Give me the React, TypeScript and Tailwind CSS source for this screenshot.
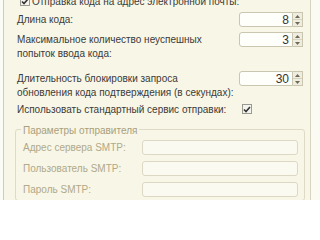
import React from "react"

const font = { fontFamily: '"Liberation Sans", Arial, sans-serif' }

function Check({ checked }: { checked?: boolean }) {
  return (
    <span className="flex h-[10px] w-[10px] shrink-0 items-center justify-center border border-[#9a9a90] bg-[#f4f3ee]">
      {checked && (
        <svg width="8" height="7" viewBox="0 0 8 7">
          <path d="M1 3.5 L3 5.5 L7 1" fill="none" stroke="#333" strokeWidth="1.6" />
        </svg>
      )}
    </span>
  )
}

function Spin({ value }: { value: string }) {
  return (
    <div className="flex h-[15px] shrink-0 items-stretch">
      <div className="flex w-[54px] items-center justify-end rounded-l-[3px] border border-[#c9c5ae] bg-[#fefefb] pr-[3px] text-[12px] text-[#333]">
        {value}
      </div>
      <div className="flex w-[10px] flex-col border-y border-r border-[#c9c5ae] bg-[#efece0]">
        <div className="flex flex-1 items-center justify-center border-b border-[#d6d2c0]">
          <svg width="5" height="3" viewBox="0 0 5 3"><path d="M0 3 L2.5 0 L5 3Z" fill="#6f6a55" /></svg>
        </div>
        <div className="flex flex-1 items-center justify-center">
          <svg width="5" height="3" viewBox="0 0 5 3"><path d="M0 0 L2.5 3 L5 0Z" fill="#6f6a55" /></svg>
        </div>
      </div>
    </div>
  )
}

function SmtpRow({ label }: { label: string }) {
  return (
    <div className="flex h-[21px] shrink-0 items-center">
      <span className="w-[119px] whitespace-nowrap text-[#b0a98a]">{label}</span>
      <div className="h-[15px] w-[156px] rounded-[3px] border border-[#dcd8c4] bg-[#fbfaf1]" />
    </div>
  )
}

export default function App() {
  return (
    <div className="flex h-[200px] w-[320px] overflow-hidden bg-[#f8f6e6] text-[#3a3a3a]" style={font}>
      <div className="w-[4px] border-r border-[#cdc9d4] bg-[#fcfcf6]" />
      <div className="flex w-[307px] shrink-0 flex-col border-r border-[#d8d4c2] pl-[13px] pr-[7px] text-[10px]">
        <div className="-mt-[6px] flex h-[14px] shrink-0 items-center gap-[2px] whitespace-nowrap pl-[3px]">
          <Check checked />
          <span>Отправка кода на адрес электронной почты:</span>
        </div>
        <div className="mt-[4px] grid h-[15px] shrink-0 grid-cols-[1fr_auto] items-center">
          <span>Длина кода:</span>
          <Spin value="8" />
        </div>
        <div className="mt-[5px] grid shrink-0 grid-cols-[1fr_auto] items-start leading-[14px]">
          <span className="min-w-0 whitespace-nowrap pt-[1px]">
            Максимальное количество неуспешных
            <br />
            попыток ввода кода:
          </span>
          <Spin value="3" />
        </div>
        <div className="mt-[10px] grid shrink-0 grid-cols-[1fr_auto] items-start leading-[14px]">
          <span className="min-w-0 whitespace-nowrap pt-[1px]">
            Длительность блокировки запроса
            <br />
            обновления кода подтверждения (в секундах):
          </span>
          <Spin value="30" />
        </div>
        <div className="mt-[2px] flex h-[14px] shrink-0 items-center">
          <span className="w-[225px] whitespace-nowrap">Использовать стандартный сервис отправки:</span>
          <Check checked />
        </div>
        <div className="relative mt-[13px] ml-[-2px] mr-[-2px] shrink-0 rounded-[3px] border border-[#dedac6] pl-[7px] pr-[4px] pt-[7px]">
          <span className="absolute -top-[7px] left-[5px] whitespace-nowrap bg-[#f8f6e6] px-[2px] text-[#a89f7c]">
            Параметры отправителя
          </span>
          <SmtpRow label="Адрес сервера SMTP:" />
          <SmtpRow label="Пользователь SMTP:" />
          <SmtpRow label="Пароль SMTP:" />
        </div>
      </div>
      <div className="flex-1 bg-[#fcfbf3]" />
    </div>
  )
}
